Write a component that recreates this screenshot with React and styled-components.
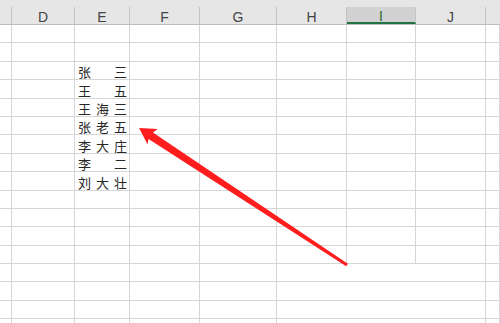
import React from "react";
import styled, { createGlobalStyle } from "styled-components";

const COLS = "12px 63px 55px 70px 77px 70px 69px 70px 14px";
const LETTERS = ["", "D", "E", "F", "G", "H", "I", "J", ""];
const ROW_COUNT = 17;
const NAMES = {
  2: ["张", "三"],
  3: ["王", "五"],
  4: ["王", "海", "三"],
  5: ["张", "老", "五"],
  6: ["李", "大", "庄"],
  7: ["李", "二"],
  8: ["刘", "大", "壮"],
};

const Global = createGlobalStyle`
  html, body { margin: 0; padding: 0; background: #fff; }
  body { font-family: "Liberation Sans", Arial, sans-serif; }
`;

const Sheet = styled.div`
  position: relative;
  width: 500px;
  height: 323px;
  overflow: hidden;
  background: #fff;
`;

const HeaderBar = styled.div`
  display: grid;
  grid-template-columns: ${COLS};
  height: 25px;
  background: #e6e6e6;
  border-bottom: 1px solid #bdbdbd;
  box-sizing: border-box;
`;

const HeaderCell = styled.div`
  box-sizing: border-box;
  margin-top: 7px;
  height: 17px;
  border-right: ${(p) => (p.$last ? "none" : "1px solid #c4c4c4")};
  background: ${(p) => (p.$selected ? "#d2d2d2" : "transparent")};
  border-bottom: ${(p) => (p.$selected ? "2px solid #217346" : "none")};
  display: flex;
  align-items: center;
  justify-content: center;
  font-family: "Liberation Sans", Arial, sans-serif;
  font-size: 14px;
  line-height: 14px;
  padding-top: 2px;
  color: ${(p) => (p.$selected ? "#2a6a35" : "#444")};
`;

const Body = styled.div`
  display: grid;
  grid-template-columns: ${COLS};
  grid-auto-rows: 18.4px;
`;

const Cell = styled.div`
  box-sizing: border-box;
  border-right: ${(p) => (p.$noRight ? "none" : "1px solid #d6d6d6")};
  border-bottom: 1px solid #d6d6d6;
`;

const NameCell = styled(Cell)`
  display: flex;
  justify-content: space-between;
  align-items: flex-end;
  padding: 0 2px 0 3px;
  font-family: "Noto Sans CJK SC", "Noto Sans", sans-serif;
  font-size: 13px;
  line-height: 15px;
  color: #262626;
`;

const Overlay = styled.svg`
  position: absolute;
  left: 0;
  top: 0;
  width: 500px;
  height: 323px;
  pointer-events: none;
`;

function Arrow() {
  const L = 249;
  const pts = [
    [0, -1.5],
    [L - 14, -4],
    [L - 16, -9],
    [L, 0],
    [L - 16, 9.5],
    [L - 14, 4],
    [0, 1.5],
  ]
    .map((p) => p.join(","))
    .join(" ");
  return (
    <Overlay viewBox="0 0 500 323">
      <g transform="translate(347 265) rotate(213.37)">
        <polygon points={pts} fill="#ff1d1d" />
      </g>
    </Overlay>
  );
}

export default function App() {
  const cells = [];
  for (let r = 0; r < ROW_COUNT; r++) {
    for (let c = 0; c < LETTERS.length; c++) {
      const key = `${r}-${c}`;
      const noRight = r >= 13 && (c === 5 || c === 6);
      if (c === 2 && NAMES[r]) {
        cells.push(
          <NameCell key={key}>
            {NAMES[r].map((ch, i) => (
              <span key={i}>{ch}</span>
            ))}
          </NameCell>
        );
      } else {
        cells.push(<Cell key={key} $noRight={noRight} />);
      }
    }
  }
  return (
    <>
      <Global />
      <Sheet>
        <HeaderBar>
          {LETTERS.map((l, i) => (
            <HeaderCell key={i} $selected={l === "I"} $last={i === LETTERS.length - 1}>
              {l}
            </HeaderCell>
          ))}
        </HeaderBar>
        <Body>{cells}</Body>
        <Arrow />
      </Sheet>
    </>
  );
}
